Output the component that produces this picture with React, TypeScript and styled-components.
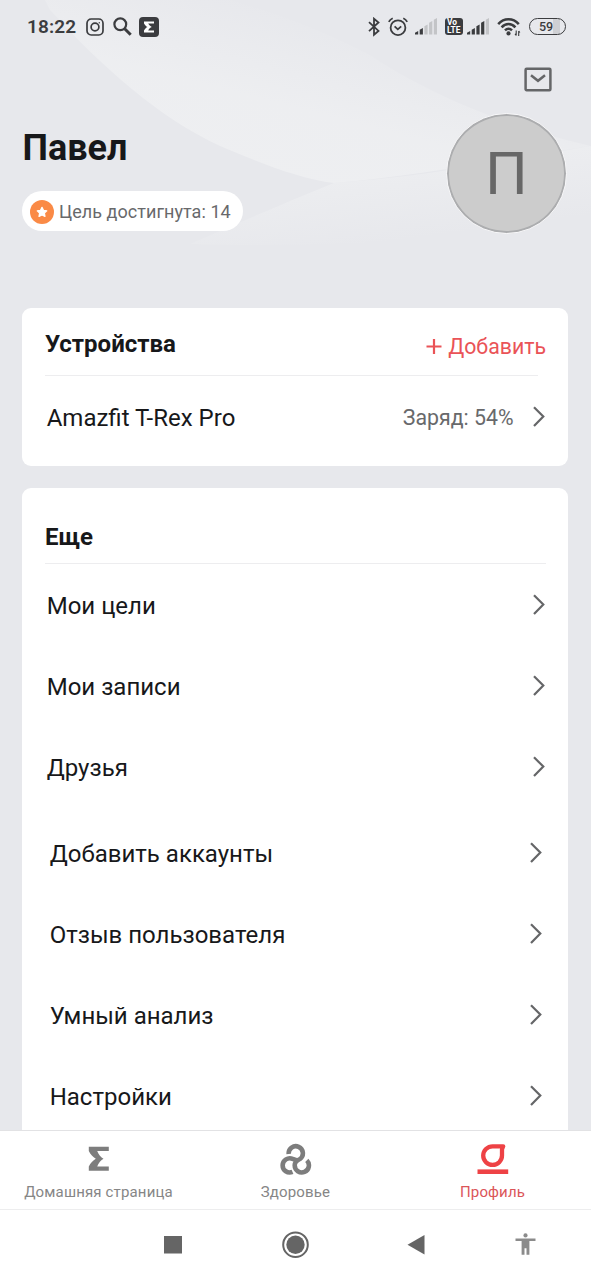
import React from "react";
import styled, { createGlobalStyle } from "styled-components";

const GlobalStyle = createGlobalStyle`
  * { box-sizing: border-box; }
  body {
    margin: 0;
    background: #e7e8ec;
    font-family: Roboto, "Noto Sans", sans-serif;
    color: #17181a;
    overflow: hidden;
  }
  svg { display: block; flex: none; }
`;

const Screen = styled.div`
  position: relative;
  width: 591px;
  height: 1280px;
  display: flex;
  flex-direction: column;
  overflow: hidden;
  background: #e7e8ec;
`;

const Backdrop = styled.svg`
  position: absolute;
  left: 0;
  top: 0;
`;

const StatusBar = styled.header`
  position: relative;
  height: 52px;
  flex: none;
  display: flex;
  align-items: center;
  padding: 1px 25px 0 27px;
  color: #3b3c3f;
`;

const Clock = styled.span`
  width: 59px;
  padding-top: 1px;
  font-size: 19px;
  font-weight: 600;
  line-height: 24px;
  letter-spacing: 0.1px;
  white-space: nowrap;
`;

const StatusIcon = styled.span<{ $gap: number }>`
  display: flex;
  margin-right: ${(p) => p.$gap}px;
`;

const Spacer = styled.div`
  flex: 1;
`;

const VoLte = styled.span`
  width: 18px;
  height: 17px;
  margin-right: 4px;
  padding: 1px 0 0 2px;
  border-radius: 3px;
  background: #3b3c3f;
  color: #fff;
  font-size: 8.4px;
  font-weight: 700;
  line-height: 7.5px;
  display: flex;
  flex-direction: column;
`;

const Battery = styled.span`
  width: 37px;
  height: 17px;
  border: 1.7px solid #3b3c3f;
  border-radius: 9px;
  padding-right: 3px;
  background: linear-gradient(90deg, #e7e8ec 65%, #cfd0d4 65%, #cfd0d4 85%, #e7e8ec 85%);
  display: flex;
  align-items: center;
  justify-content: center;
  font-size: 12.5px;
  font-weight: 500;
  line-height: 14px;
`;

const Profile = styled.section`
  position: relative;
  height: 256px;
  flex: none;
  display: flex;
  justify-content: space-between;
  padding: 0 24px 0 22px;
`;

const Identity = styled.div`
  display: flex;
  flex-direction: column;
  align-items: flex-start;
  padding-top: 75px;
`;

const Name = styled.h1`
  margin: 0 0 22px 0.5px;
  font-size: 36px;
  font-weight: 700;
  line-height: 42px;
`;

const GoalPill = styled.div`
  width: 221px;
  height: 40px;
  border-radius: 20px;
  background: #fff;
  display: flex;
  align-items: center;
  gap: 5px;
  padding: 1px 0 0 8px;
  color: #68696b;
  font-size: 18px;
  letter-spacing: 0.05px;
  white-space: nowrap;
`;

const Aside = styled.div`
  display: flex;
  flex-direction: column;
  align-items: flex-end;
  padding-top: 15px;
`;

const MailButton = styled.div`
  margin: 0 15.5px 20.5px 0;
`;

const Avatar = styled.div`
  width: 121px;
  height: 121px;
  border-radius: 50%;
  border: 1.5px solid #f8f8fa;
  background: #ccc;
  box-shadow: inset 0 0 0 2px #acadaf;
  display: flex;
  align-items: center;
  justify-content: center;
  padding: 1px 0 0 0;
  color: #676767;
  font-size: 60px;
  line-height: 72px;
`;

const Card = styled.section<{ $height: number; $open?: boolean }>`
  position: relative;
  height: ${(p) => p.$height}px;
  flex: none;
  margin: 0 23px ${(p) => (p.$open ? 0 : 22)}px 22px;
  padding: 0 22px 0 23px;
  border-radius: ${(p) => (p.$open ? "9px 9px 0 0" : "9px")};
  background: #fff;
`;

const CardHead = styled.div<{ $height: number; $pad: number; $short?: boolean }>`
  height: ${(p) => p.$height}px;
  display: flex;
  justify-content: space-between;
  padding-top: ${(p) => p.$pad}px;
  background: linear-gradient(#ededef, #ededef) no-repeat left bottom /
    ${(p) => (p.$short ? "493px" : "100%")} 1px;
`;

const CardTitle = styled.h2`
  margin: 0;
  font-size: 24px;
  font-weight: 700;
  line-height: 28px;
`;

const AddLink = styled.span`
  display: flex;
  align-items: center;
  gap: 6px;
  padding-top: 4px;
  height: 30px;
  color: #ea5357;
  font-size: 21.3px;
  line-height: 26px;
  white-space: nowrap;
`;

const Row = styled.div<{ $inset?: boolean; $height?: number }>`
  height: ${(p) => p.$height ?? 81}px;
  display: flex;
  align-items: center;
  justify-content: space-between;
  padding: 0 ${(p) => (p.$inset ? 4.5 : 1.5)}px 0 ${(p) => (p.$inset ? 4.7 : 1.7)}px;
`;

const RowLabel = styled.span<{ $tight?: boolean }>`
  font-size: 24px;
  line-height: 28px;
  padding-top: ${(p) => (p.$tight ? 1 : 3)}px;
  white-space: nowrap;
`;

const RowEnd = styled.span`
  display: flex;
  align-items: center;
  gap: 18px;
`;

const Charge = styled.span`
  padding-top: 2px;
  color: #68696b;
  font-size: 21.3px;
  line-height: 26px;
`;

const Group = styled.div<{ $top: number }>`
  padding-top: ${(p) => p.$top}px;
`;

const TabBar = styled.nav`
  position: relative;
  height: 80px;
  flex: none;
  display: grid;
  grid-template-columns: repeat(3, 1fr);
  border-top: 1px solid #e2e2e4;
  border-bottom: 1px solid #ededee;
  background: #fff;
`;

const Tab = styled.div<{ $active?: boolean }>`
  display: flex;
  flex-direction: column;
  align-items: center;
  padding-top: 12px;
  gap: 8px;
  color: ${(p) => (p.$active ? "#db5559" : "#868686")};
  font-size: 15px;
  line-height: 18px;
  letter-spacing: 0.15px;
  white-space: nowrap;
`;

const NavBar = styled.div`
  height: 70px;
  flex: none;
  display: grid;
  grid-template-columns: 20px 28px 20px 22px;
  column-gap: 97.5px;
  align-items: center;
  padding: 0 0 0 163px;
  background: #fff;

  & > :last-child {
    margin-left: -9.5px;
  }
`;

const Chevron = () => (
  <svg width="13" height="22" viewBox="0 0 13 22" fill="none" stroke="#656668" strokeWidth="2.2">
    <path d="M2 1.2 11.3 10.6 2 20" />
  </svg>
);

const Signal = ({ level }: { level: number }) => (
  <svg width="22" height="17" viewBox="0 0 22 17">
    {[3, 6, 9.5, 13, 16].map((h, i) => (
      <path
        key={h}
        d={`M${i * 4.7} 16.5v${1.2 - h}l3.2-1.700v${h + 0.5}z`}
        fill={i < level ? "#3b3c3f" : "#c3c4c7"}
      />
    ))}
  </svg>
);

const goals = ["Мои цели", "Мои записи", "Друзья"];
const settings = ["Добавить аккаунты", "Отзыв пользователя", "Умный анализ", "Настройки"];

export default function App() {
  return (
    <>
      <GlobalStyle />
      <Screen>
        <Backdrop width="591" height="308" viewBox="0 0 591 308">
          <defs>
            <linearGradient id="sweep" gradientUnits="userSpaceOnUse" x1="300" y1="10" x2="260" y2="165">
              <stop offset="0" stopColor="#eff0f2" stopOpacity="0" />
              <stop offset="0.6" stopColor="#eff0f2" stopOpacity="0.75" />
              <stop offset="1" stopColor="#eff0f2" stopOpacity="0.85" />
            </linearGradient>
            <linearGradient id="tail" gradientUnits="userSpaceOnUse" x1="430" y1="160" x2="440" y2="236">
              <stop offset="0" stopColor="#eff0f2" stopOpacity="0.7" />
              <stop offset="1" stopColor="#eff0f2" stopOpacity="0" />
            </linearGradient>
          </defs>
          <path
            d="M50 10C105 70 160 118 220 146C260 163 300 179 334 183C420 176 500 160 591 146C500 125 425 92 370 55C320 30 280 14 230 0H45Z"
            fill="url(#sweep)"
          />
          <path d="M334 183C430 176 510 160 591 146V225C450 240 330 248 190 244C240 222 285 203 334 183Z" fill="url(#tail)" />
        </Backdrop>

        <StatusBar>
          <Clock>18:22</Clock>
          <StatusIcon $gap={9}>
            <svg width="18" height="18" viewBox="0 0 18 18" fill="none" stroke="#3b3c3f" strokeWidth="1.7">
              <rect x="1" y="1" width="16" height="16" rx="4.2" />
              <circle cx="9" cy="9" r="3.9" />
              <circle cx="13.3" cy="4.8" r="0.7" fill="#3b3c3f" stroke="none" />
            </svg>
          </StatusIcon>
          <StatusIcon $gap={7}>
            <svg width="19" height="19" viewBox="0 0 19 19" fill="none" stroke="#3b3c3f">
              <circle cx="7.3" cy="7.3" r="5.9" strokeWidth="2.2" />
              <path d="m11.7 11.7 6 6" strokeWidth="3" />
            </svg>
          </StatusIcon>
          <StatusIcon $gap={0}>
            <svg width="20" height="20" viewBox="0 0 20 20">
              <rect width="20" height="20" rx="4" fill="#3b3c3f" />
              <path d="M5 4.5h10v2.1H9.2C10 8.2 11.3 9.4 12.8 10c-1.5.6-2.8 1.8-3.6 3.4H15v2.1H5v-2C5.8 11.9 7 10.7 8.500 10 7 9.3 5.8 8.1 5 6.5Z" fill="#fff" />
            </svg>
          </StatusIcon>
          <Spacer />
          <StatusIcon $gap={8}>
            <svg width="12" height="20" viewBox="0 0 12 20" fill="none" stroke="#3b3c3f" strokeWidth="1.8">
              <path d="m1 5.2 9.5 8.700L6 17.700V1.700l4.500 3.800L1 14.200" />
            </svg>
          </StatusIcon>
          <StatusIcon $gap={7}>
            <svg width="20" height="20" viewBox="0 0 20 20" fill="none" stroke="#3b3c3f" strokeWidth="1.8">
              <circle cx="10" cy="10.700" r="7.4" />
              <path d="m6.6 9.4 3.2 3 3.4-3M.8 4.900A8 8 0 0 1 4.700 1.200M19.200 4.900a8 8 0 0 0-3.900-3.700" />
            </svg>
          </StatusIcon>
          <StatusIcon $gap={8}>
            <Signal level={2} />
          </StatusIcon>
          <VoLte>
            <span>Vo</span>
            <span>LTE</span>
          </VoLte>
          <StatusIcon $gap={8}>
            <Signal level={4} />
          </StatusIcon>
          <StatusIcon $gap={8}>
            <svg width="24" height="20" viewBox="0 0 24 20" fill="none" stroke="#3b3c3f" strokeWidth="2.5">
              <path d="M1.2 7.2C7 .7 16 .7 21.8 7.2M4.6 10.4c4-4.4 9.8-4.4 13.8 0M8 13.4c2.2-2.3 4.8-2.3 7 0" />
              <circle cx="11.5" cy="16.4" r="2.1" fill="#3b3c3f" stroke="none" />
              <path d="M19.2 13.5v5M18 16.8l1.2 1.6M21.7 19v-5M22.9 15.5 21.7 14" strokeWidth="1.1" />
            </svg>
          </StatusIcon>
          <Battery>59</Battery>
        </StatusBar>

        <Profile>
          <Identity>
            <Name>Павел</Name>
            <GoalPill>
              <svg width="24" height="24" viewBox="0 0 24 24">
                <circle cx="12" cy="12" r="12" fill="#fa8a46" />
                <path
                  d="m12 7.3 1.5 3 3.3.5-2.4 2.3.6 3.3-3-1.5-3 1.5.6-3.3-2.4-2.3 3.3-.5Z"
                  fill="#fff"
                  stroke="#fff"
                  strokeWidth="1.2"
                  strokeLinejoin="round"
                />
              </svg>
              <span>Цель достигнута: 14</span>
            </GoalPill>
          </Identity>
          <Aside>
            <MailButton>
              <svg width="28" height="25" viewBox="0 0 28 25" fill="none" stroke="#656668" strokeWidth="2.5">
                <rect x="1.6" y="1.8" width="24.8" height="21.4" rx="1" />
                <path d="m7 8.2 7 5.6 7-5.6" />
              </svg>
            </MailButton>
            <Avatar>П</Avatar>
          </Aside>
        </Profile>

        <Card $height={158}>
          <CardHead $height={68} $pad={22} $short>
            <CardTitle>Устройства</CardTitle>
            <AddLink>
              <svg width="16" height="16" viewBox="0 0 16 16" stroke="#ea5357" strokeWidth="2.2">
                <path d="M8 0v15M.5 7.500h15" />
              </svg>
              Добавить
            </AddLink>
          </CardHead>
          <Row $height={82}>
            <RowLabel $tight>Amazfit T-Rex Pro</RowLabel>
            <RowEnd>
              <Charge>Заряд: 54%</Charge>
              <Chevron />
            </RowEnd>
          </Row>
        </Card>

        <Card $height={642} $open>
          <CardHead $height={76} $pad={35}>
            <CardTitle>Еще</CardTitle>
          </CardHead>
          <Group $top={0}>
            {goals.map((t) => (
              <Row key={t}>
                <RowLabel>{t}</RowLabel>
                <Chevron />
              </Row>
            ))}
          </Group>
          <Group $top={5}>
            {settings.map((t) => (
              <Row key={t} $inset>
                <RowLabel>{t}</RowLabel>
                <Chevron />
              </Row>
            ))}
          </Group>
        </Card>

        <TabBar>
          <Tab>
            <svg width="32" height="32" viewBox="0 0 32 32" fill="#7d7d7d">
              <path d="M5.8 3.7H25.8V8H14.2C15.5 11.5 18 14.3 20.5 15.7C18 17 15.5 20 14.2 23.4H25.8V27.7H5.8V23.5C7.5 20 10 17.3 12.8 15.7C10 14 7.5 11.5 5.8 8Z" />
            </svg>
            Домашняя страница
          </Tab>
          <Tab>
            <svg width="32" height="32" viewBox="0 0 32 32" fill="none" stroke="#7d7d7d" strokeWidth="4.6">
              <path d="M8.7 11A7.1 7.1 0 1 1 20 16C16.5 17.5 14.7 19.5 14.7 22.3A7.1 7.1 0 1 0 26.8 17.3" />
              <path d="M12.5 28.9A7.1 7.1 0 1 1 12.7 15.9L17 17.5" />
            </svg>
            Здоровье
          </Tab>
          <Tab $active>
            <svg width="32" height="32" viewBox="0 0 32 32" fill="none" stroke="#ee4245">
              <path d="M15.6 3.3H26.2L25 6.2V12.6A9.4 9.3 0 1 1 15.6 3.3Z" strokeWidth="4.3" strokeLinejoin="round" />
              <path d="M.5 28.7h30.7" strokeWidth="4.6" />
            </svg>
            Профиль
          </Tab>
        </TabBar>

        <NavBar>
          <svg width="20" height="20" viewBox="0 0 20 20">
            <rect x="1" y="1" width="18" height="17.5" fill="#656565" />
          </svg>
          <svg width="28" height="28" viewBox="0 0 28 28">
            <circle cx="14.5" cy="13.7" r="12.3" fill="none" stroke="#656565" strokeWidth="2" />
            <circle cx="14.5" cy="13.7" r="9.2" fill="#656565" />
          </svg>
          <svg width="20" height="22" viewBox="0 0 20 22">
            <path d="M1.5 10.7 18.5.9v19.600Z" fill="#656565" />
          </svg>
          <svg width="22" height="24" viewBox="0 0 22 24" fill="#8b8b8b">
            <circle cx="11.5" cy="2.4" r="2.1" />
            <path d="M1.500 5.400h20v2.700h-6.100v13.600H12.500v-6.500h-2v6.500H7.600V8.100H1.500Z" />
          </svg>
        </NavBar>
      </Screen>
    </>
  );
}
